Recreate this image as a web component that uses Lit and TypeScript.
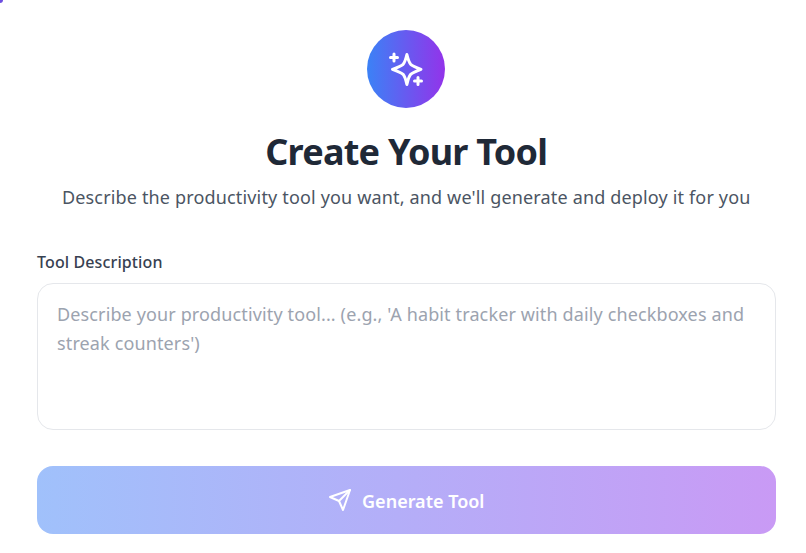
import { LitElement, html, css } from "lit";
import { customElement } from "lit/decorators.js";

@customElement("app-root")
export class AppRoot extends LitElement {
  static styles = css`
    :host { display: block; width: 806px; height: 553px; background: #fff; position: relative; overflow: hidden;
      font-family: "Noto Sans", "Liberation Sans", sans-serif; box-sizing: border-box; }
    .corner { position: absolute; left: -3px; top: -3px; width: 6px; height: 6px; border-radius: 50%; background: #6d4fe0; }
    .page { display: flex; flex-direction: column; align-items: stretch; padding: 30px 30.5px 0 37px; }
    .head { display: flex; flex-direction: column; align-items: center; }
    .logo { width: 78px; height: 78px; border-radius: 50%; background: linear-gradient(to right, #3b82f6, #9333ea);
      display: flex; align-items: center; justify-content: center; }
    h1 { margin: 20px 0 0; font-size: 36px; line-height: 48px; font-weight: 700; color: #1f2937; letter-spacing: -0.75px; }
    .sub { margin: 7px 0 0; font-size: 18px; line-height: 28px; color: #4b5563; letter-spacing: 0.16px; }
    label { display: block; margin-top: 39px; font-size: 16px; line-height: 24px; font-weight: 500; color: #374151; letter-spacing: 0.12px; }
    .ta { margin-top: 9px; height: 147px; box-sizing: border-box; border: 1px solid #e5e7eb; border-radius: 16px;
      padding: 16px 19px; font-size: 18px; line-height: 29px; color: #9ca3af; background: #fff; letter-spacing: 0.13px; }
    .btn { margin-top: 36px; height: 68px; border-radius: 16px; display: flex; align-items: center; justify-content: center; gap: 10px;
      background: linear-gradient(to right, #a0c1fb, #c99af5); color: #fff; font-size: 18px; font-weight: 600; }
    .btn span { padding-top: 1px; }
  `;
  render() {
    return html`
      <div class="corner"></div>
      <div class="page">
        <div class="head">
          <div class="logo">
            <svg width="40" height="40" viewBox="0 0 40 40" fill="none" stroke="#fff" stroke-linecap="round" stroke-linejoin="round" stroke-width="3">
              <path d="M20.900 5.500C22.200 11 23.300 13.700 24.700 15.300C26.300 16.800 29 18 35 20.300C29 22.600 26.300 23.800 24.700 25.300C23.300 26.900 22.200 29.600 20.900 35.500C19.600 29.600 18.500 26.900 17.100 25.300C15.500 23.800 12.800 22.600 6.500 20.300C12.800 18 15.500 16.800 17.100 15.300C18.500 13.700 19.600 11 20.900 5.500Z"/>
              <path d="M8 5v7M4.500 8.500h7M32 28.500v7M28.500 32h7"/>
            </svg>
          </div>
          <h1>Create Your Tool</h1>
          <p class="sub">Describe the productivity tool you want, and we'll generate and deploy it for you</p>
        </div>
        <label>Tool Description</label>
        <div class="ta">Describe your productivity tool... (e.g., 'A habit tracker with daily checkboxes and streak counters')</div>
        <div class="btn">
          <svg width="24" height="24" viewBox="0 0 24 24" fill="none" stroke="#fff" stroke-width="2" stroke-linecap="round" stroke-linejoin="round">
            <path d="m22 2-7 20-4-9-9-4Z"/>
            <path d="M22 2 11 13"/>
          </svg>
          <span>Generate Tool</span>
        </div>
      </div>
    `;
  }
}
